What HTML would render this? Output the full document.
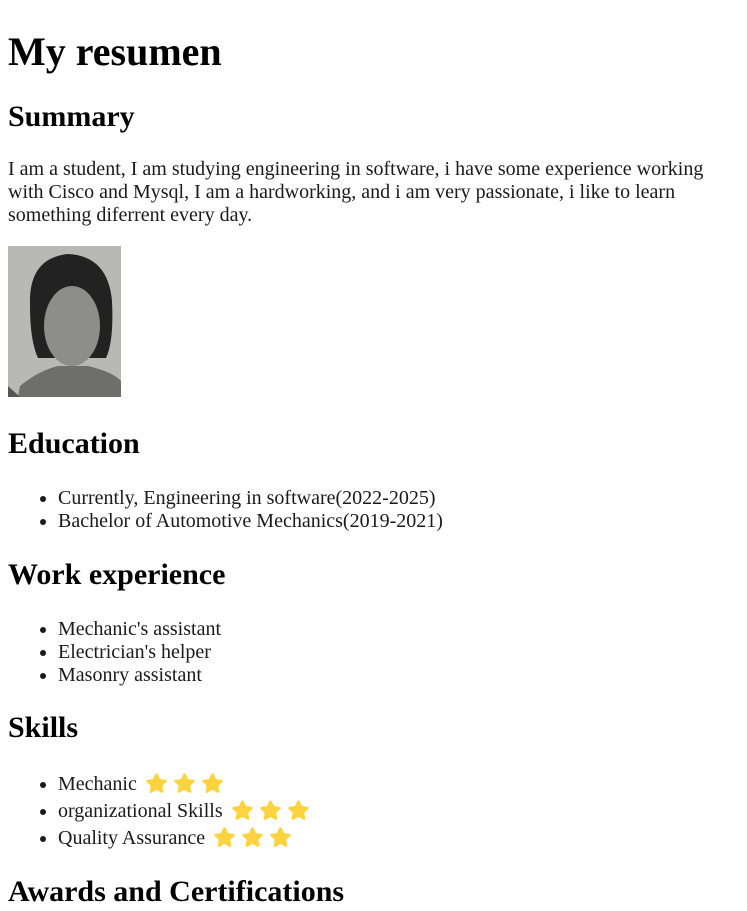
<!DOCTYPE html>
<html><head><meta charset="utf-8"><style>
body{margin:0;width:747px;height:911px;overflow:hidden;background:#fff;font-family:"Liberation Serif",serif;color:#1a1a1a;position:relative}
.a{position:absolute;left:8px;margin:0}
h1{font-size:40px;line-height:46px;font-weight:bold;color:#000}
h2{font-size:30px;line-height:34px;font-weight:bold;color:#000}
p{font-size:20px;line-height:23px;width:720px}
ul{list-style:disc;padding-left:50px;font-size:20px;line-height:23px}
ul.s li{height:27px;line-height:27px}
.st{display:inline-block;width:21px;height:21px;vertical-align:-4px;margin-left:7px}
.st:first-of-type{margin-left:9px}
.photo{width:113px;height:151px;top:246px;overflow:hidden}
</style></head><body>
<h1 class="a" style="top:29px">My resumen</h1>
<h2 class="a" style="top:100px">Summary</h2>
<p class="a" style="top:158px">I am a student, I am studying engineering in software, i have some experience working with Cisco and Mysql, I am a hardworking, and i am very passionate, i like to learn something diferrent every day.</p>
<div class="a photo"><svg width="113" height="151" viewBox="0 0 113 151">
<rect width="113" height="151" fill="#b8b8b6"/>
<path d="M22 60 Q20 12 60 8 Q100 10 104 55 Q106 95 98 112 L30 112 Q22 95 22 60Z" fill="#222"/>
<ellipse cx="64" cy="80" rx="28" ry="40" fill="#8d8d8b"/>
<path d="M10 151 L12 140 Q30 125 50 120 L80 120 Q105 126 113 135 L113 151Z" fill="#6e6e6c"/>
<path d="M0 151 L0 140 L12 151Z" fill="#555"/>
</svg></div>
<h2 class="a" style="top:427px">Education</h2>
<ul class="a" style="top:487px"><li>Currently, Engineering in software(2022-2025)</li><li>Bachelor of Automotive Mechanics(2019-2021)</li></ul>
<h2 class="a" style="top:558px">Work experience</h2>
<ul class="a" style="top:618px"><li>Mechanic's assistant</li><li>Electrician's helper</li><li>Masonry assistant</li></ul>
<h2 class="a" style="top:711px">Skills</h2>
<ul class="a s" style="top:771px">
<li>Mechanic<svg class="st" viewBox="2 2 20 20"><path d="M12 3.5l2.6 5.4 5.9.8-4.3 4.1 1.1 5.9L12 16.8l-5.3 2.9 1.1-5.9-4.3-4.1 5.9-.8z" fill="#fdd33f" stroke="#fdd33f" stroke-width="2.4" stroke-linejoin="round"/></svg><svg class="st" viewBox="2 2 20 20"><path d="M12 3.5l2.6 5.4 5.9.8-4.3 4.1 1.1 5.9L12 16.8l-5.3 2.9 1.1-5.9-4.3-4.1 5.9-.8z" fill="#fdd33f" stroke="#fdd33f" stroke-width="2.4" stroke-linejoin="round"/></svg><svg class="st" viewBox="2 2 20 20"><path d="M12 3.5l2.6 5.4 5.9.8-4.3 4.1 1.1 5.9L12 16.8l-5.3 2.9 1.1-5.9-4.3-4.1 5.9-.8z" fill="#fdd33f" stroke="#fdd33f" stroke-width="2.4" stroke-linejoin="round"/></svg></li>
<li>organizational Skills<svg class="st" viewBox="2 2 20 20"><path d="M12 3.5l2.6 5.4 5.9.8-4.3 4.1 1.1 5.9L12 16.8l-5.3 2.9 1.1-5.9-4.3-4.1 5.9-.8z" fill="#fdd33f" stroke="#fdd33f" stroke-width="2.4" stroke-linejoin="round"/></svg><svg class="st" viewBox="2 2 20 20"><path d="M12 3.5l2.6 5.4 5.9.8-4.3 4.1 1.1 5.9L12 16.8l-5.3 2.9 1.1-5.9-4.3-4.1 5.9-.8z" fill="#fdd33f" stroke="#fdd33f" stroke-width="2.4" stroke-linejoin="round"/></svg><svg class="st" viewBox="2 2 20 20"><path d="M12 3.5l2.6 5.4 5.9.8-4.3 4.1 1.1 5.9L12 16.8l-5.3 2.9 1.1-5.9-4.3-4.1 5.9-.8z" fill="#fdd33f" stroke="#fdd33f" stroke-width="2.4" stroke-linejoin="round"/></svg></li>
<li>Quality Assurance<svg class="st" viewBox="2 2 20 20"><path d="M12 3.5l2.6 5.4 5.9.8-4.3 4.1 1.1 5.9L12 16.8l-5.3 2.9 1.1-5.9-4.3-4.1 5.9-.8z" fill="#fdd33f" stroke="#fdd33f" stroke-width="2.4" stroke-linejoin="round"/></svg><svg class="st" viewBox="2 2 20 20"><path d="M12 3.5l2.6 5.4 5.9.8-4.3 4.1 1.1 5.9L12 16.8l-5.3 2.9 1.1-5.9-4.3-4.1 5.9-.8z" fill="#fdd33f" stroke="#fdd33f" stroke-width="2.4" stroke-linejoin="round"/></svg><svg class="st" viewBox="2 2 20 20"><path d="M12 3.5l2.6 5.4 5.9.8-4.3 4.1 1.1 5.9L12 16.8l-5.3 2.9 1.1-5.9-4.3-4.1 5.9-.8z" fill="#fdd33f" stroke="#fdd33f" stroke-width="2.4" stroke-linejoin="round"/></svg></li>
</ul>
<h2 class="a" style="top:875px">Awards and Certifications</h2>
</body></html>
